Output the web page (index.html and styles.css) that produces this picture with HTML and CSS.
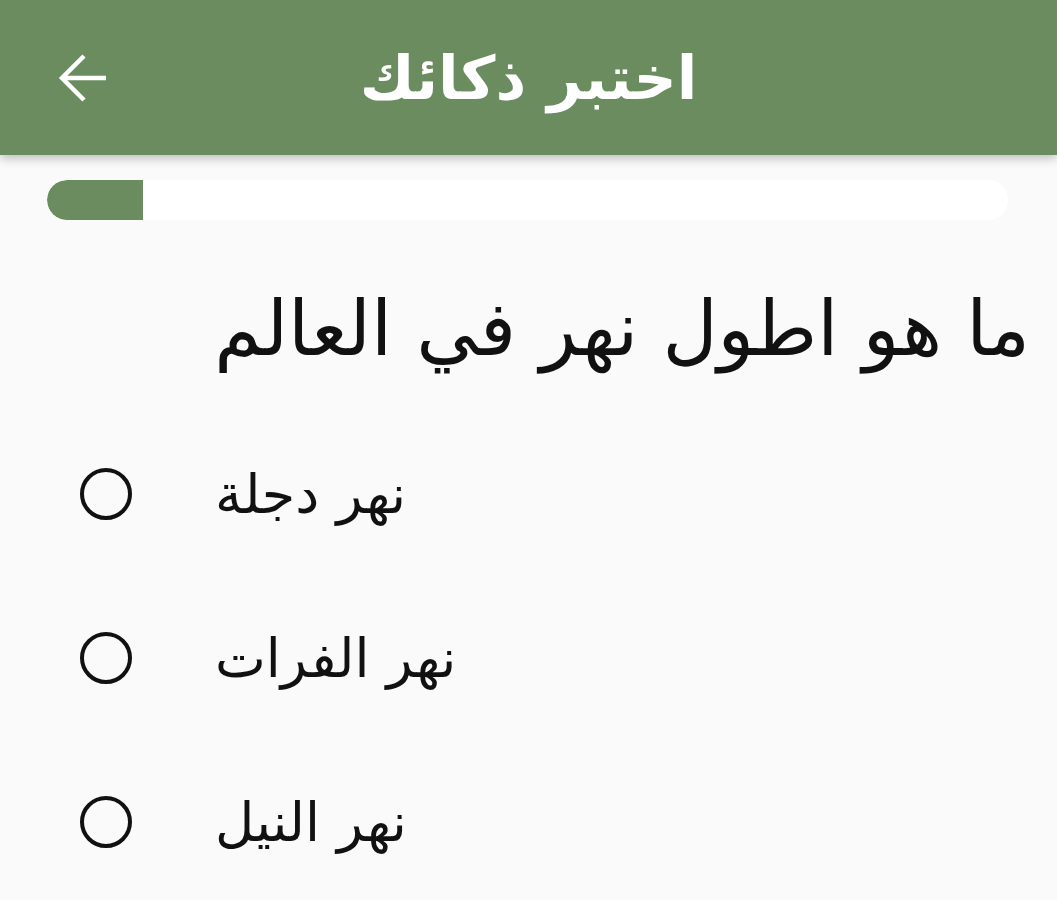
FILE: index.html
```html
<!DOCTYPE html>
<html lang="ar">
<head>
<meta charset="utf-8">
<link rel="stylesheet" href="styles.css">
</head>
<body>
<header class="appbar">
  <div class="appbar-lead">
    <svg class="back" viewBox="0 0 50 50" width="50" height="50">
      <path d="M48 25H4M26 3L4 25l22 22" fill="none" stroke="#fff" stroke-width="4.5"/>
    </svg>
  </div>
  <h1 class="title">اختبر ذكائك</h1>
  <div></div>
</header>
<main class="content">
  <div class="progress"><div class="progress-fill" style="width:96px"></div></div>
  <h2 class="question">ما هو اطول نهر في العالم</h2>
  <ul class="options">
    <li class="option"><span class="radio"></span><span class="label">نهر دجلة</span></li>
    <li class="option"><span class="radio"></span><span class="label">نهر الفرات</span></li>
    <li class="option"><span class="radio"></span><span class="label">نهر النيل</span></li>
  </ul>
</main>
</body>
</html>
```
FILE: styles.css
```css
* { box-sizing: border-box; }
html, body { margin: 0; padding: 0; }
body {
  background: #fafafa;
  font-family: "DejaVu Sans", "Noto Sans", sans-serif;
  color: #111;
  width: 1057px;
  height: 900px;
  overflow: hidden;
}
.appbar {
  height: 155px;
  background: #6b8c5f;
  display: grid;
  grid-template-columns: 1fr auto 1fr;
  align-items: center;
  box-shadow: 0 3px 10px rgba(0,0,0,0.26);
  position: relative;
  z-index: 1;
}
.appbar-lead {
  padding-left: 58px;
  display: flex;
  align-items: center;
}
.back { display: block; }
.title {
  margin: 0;
  color: #fff;
  font-size: 60px;
  font-weight: bold;
  direction: rtl;
  line-height: 1;
}
.content {
  padding: 25px 49px 0 47px;
}
.progress {
  height: 40px;
  background: #fff;
  border-radius: 20px;
  overflow: hidden;
}
.progress-fill {
  height: 100%;
  background: #6b8c5f;
  border-radius: 20px 0 0 20px;
}
.question {
  margin: 54px -22px 0 0;
  direction: rtl;
  text-align: right;
  font-weight: normal;
  font-size: 76px;
  line-height: 110px;
  color: #111;
}
.options {
  list-style: none;
  margin: 28px 0 0;
  padding: 0;
}
.option {
  display: flex;
  align-items: center;
  height: 164px;
}
.radio {
  width: 52px;
  height: 52px;
  border: 4px solid #111;
  border-radius: 50%;
  margin-left: 33px;
  flex: none;
}
.label {
  margin-left: 83px;
  direction: rtl;
  font-size: 54px;
  color: #111;
}
```
